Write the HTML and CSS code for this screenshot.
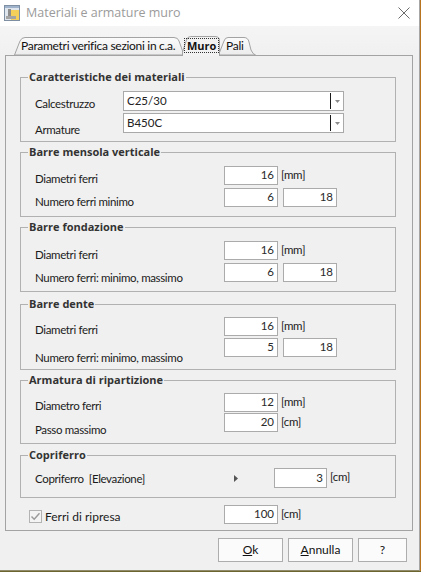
FILE: index.html
```html
<!DOCTYPE html>
<html lang="it">
<head>
<meta charset="utf-8">
<title>Materiali e armature muro</title>
<link rel="stylesheet" href="styles.css">
</head>
<body>
<div class="window">
  <div class="titlebar">
    <svg class="app-icon" width="16" height="16" viewBox="0 0 16 16">
      <rect x="0.5" y="0.5" width="15" height="15" fill="#dfe6ee" stroke="#7f8fa3"/>
      <rect x="1" y="1" width="14" height="2" fill="#9fb4cc"/>
      <rect x="7" y="5" width="8" height="10" fill="#f4cf5a"/>
      <rect x="4" y="4" width="3" height="8" fill="#8d8d8d"/>
      <rect x="2" y="11" width="10" height="3" fill="#a4a4a4"/>
    </svg>
    <span class="title">Materiali e armature muro</span>
    <svg class="close" width="12" height="12" viewBox="0 0 12 12">
      <path d="M0.5 0.5 L11.5 11.5 M11.5 0.5 L0.5 11.5" stroke="#6b6b6b" stroke-width="1" fill="none"/>
    </svg>
  </div>

  <div class="content">
    <div class="tabs">
      <div class="tab tab-first">
        <svg class="tab-shape" width="172" height="18" viewBox="0 0 172 18">
          <defs>
            <linearGradient id="tg" x1="0" y1="0" x2="0" y2="1">
              <stop offset="0" stop-color="#fbfbfb"/>
              <stop offset="1" stop-color="#ececec"/>
            </linearGradient>
          </defs>
          <path d="M0.5 18 L6 4 Q7.5 0.5 11 0.5 L160 0.5 Q164 0.5 165 4 L170 18 Z" fill="url(#tg)" stroke="#a3a3a3"/>
        </svg>
        <span class="tab-text">Parametri verifica sezioni in c.a.</span>
      </div>
      <div class="tab tab-active">
        <svg class="tab-shape" width="39" height="20" viewBox="0 0 39 20">
          <path d="M0.5 20 L0.5 16 L4.5 4 Q5.5 0.5 8.5 0.5 L33 0.5 Q37.5 0.5 37.5 4.5 L37.5 20 Z" fill="#f2f2f2"/>
          <path d="M0.5 20 L0.5 16 L4.5 4 Q5.5 0.5 8.5 0.5 L33 0.5 Q37.5 0.5 37.5 4.5 L37.5 20" fill="none" stroke="#a3a3a3"/>
        </svg>
        <span class="tab-text focus">Muro</span>
      </div>
      <div class="tab tab-last">
        <svg class="tab-shape" width="38" height="18" viewBox="0 0 38 18">
          <path d="M0.5 18 L6 4 Q7 0.5 10 0.5 L26 0.5 Q30 0.5 31 5 L33 13 Q35 17.5 37.5 18 Z" fill="url(#tg)" stroke="#a3a3a3"/>
        </svg>
        <span class="tab-text">Pali</span>
      </div>
    </div>

    <div class="panel">
      <fieldset class="group g1">
        <legend>Caratteristiche dei materiali</legend>
        <div class="rows">
          <div class="row">
            <span class="label lab-combo off-5">Calcestruzzo</span>
            <div class="combo"><span class="combo-value">C25/30</span><span class="combo-btn"><svg width="5" height="3" viewBox="0 0 5 3"><path d="M0 0 H5 L2.5 3 Z" fill="#8a8a8a"/></svg></span></div>
          </div>
          <div class="row">
            <span class="label lab-combo off-9">Armature</span>
            <div class="combo"><span class="combo-value">B450C</span><span class="combo-btn"><svg width="5" height="3" viewBox="0 0 5 3"><path d="M0 0 H5 L2.5 3 Z" fill="#8a8a8a"/></svg></span></div>
          </div>
        </div>
      </fieldset>

      <fieldset class="group g2">
        <legend>Barre mensola verticale</legend>
        <div class="rows">
          <div class="row">
            <span class="label lab-num off-5">Diametri ferri</span>
            <span class="field">16</span><span class="unit">[mm]</span>
          </div>
          <div class="row">
            <span class="label lab-num off-6">Numero ferri minimo</span>
            <span class="field">6</span><span class="field second">18</span>
          </div>
        </div>
      </fieldset>

      <fieldset class="group g3">
        <legend>Barre fondazione</legend>
        <div class="rows">
          <div class="row">
            <span class="label lab-num off-6">Diametri ferri</span>
            <span class="field">16</span><span class="unit">[mm]</span>
          </div>
          <div class="row">
            <span class="label lab-num off-7">Numero ferri: minimo, massimo</span>
            <span class="field">6</span><span class="field second">18</span>
          </div>
        </div>
      </fieldset>

      <fieldset class="group g4">
        <legend>Barre dente</legend>
        <div class="rows">
          <div class="row">
            <span class="label lab-num off-5">Diametri ferri</span>
            <span class="field">16</span><span class="unit">[mm]</span>
          </div>
          <div class="row">
            <span class="label lab-num off-12">Numero ferri: minimo, massimo</span>
            <span class="field">5</span><span class="field second">18</span>
          </div>
        </div>
      </fieldset>

      <fieldset class="group g5">
        <legend>Armatura di ripartizione</legend>
        <div class="rows">
          <div class="row">
            <span class="label lab-num off-5">Diametro ferri</span>
            <span class="field">12</span><span class="unit">[mm]</span>
          </div>
          <div class="row">
            <span class="label lab-num off-9">Passo massimo</span>
            <span class="field">20</span><span class="unit">[cm]</span>
          </div>
        </div>
      </fieldset>

      <fieldset class="group g6">
        <legend>Copriferro</legend>
        <div class="rows">
          <div class="row">
            <span class="label lab-cop off-3">Copriferro&nbsp;&nbsp;[Elevazione]</span>
            <span class="arrow"><svg width="4" height="7" viewBox="0 0 4 7"><path d="M0 0 L4 3.5 L0 7 Z" fill="#555"/></svg></span>
            <span class="field narrow">3</span><span class="unit">[cm]</span>
          </div>
        </div>
      </fieldset>

      <div class="check-row">
        <span class="check-label">
          <span class="checkbox"><svg width="11" height="11" viewBox="0 0 11 11"><path d="M1.5 5.5 L4.2 8.3 L9.5 2.3" fill="none" stroke="#9a9a9a" stroke-width="1.4"/></svg></span>
          <span class="check-text">Ferri di ripresa</span>
        </span>
        <span class="field">100</span><span class="unit">[cm]</span>
      </div>
    </div>

    <div class="buttons">
      <button class="btn"><u>O</u>k</button>
      <button class="btn"><u>A</u>nnulla</button>
      <button class="btn btn-help">?</button>
    </div>
  </div>
</div>
</body>
</html>
```

FILE: styles.css
```css
* { box-sizing: border-box; }

html, body {
  margin: 0;
  padding: 0;
}

body {
  width: 421px;
  height: 572px;
  background: #6c6530;
  font-family: Lato, "Open Sans", "DejaVu Sans", sans-serif;
  font-size: 11.5px;
  color: #1b1b1b;
  overflow: hidden;
}

.window {
  width: 420px;
  height: 571px;
  background: #f0f0f0;
  border-right: 1px solid #a6a6a6;
  border-bottom: 1px solid #8e8a6a;
  box-shadow: 1px 0 0 #b8741f;
}

/* title bar */
.titlebar {
  height: 26px;
  background: #ffffff;
  display: flex;
  align-items: center;
}

.app-icon {
  margin-left: 4px;
  flex: none;
}

.title {
  margin-left: 6px;
  font-family: "Open Sans", "Noto Sans", sans-serif;
  font-size: 12.5px;
  color: #9b9b9b;
  line-height: 16px;
}

.close {
  margin-left: auto;
  margin-right: 9px;
}

/* content */
.content {
  padding: 0 6px 0 5px;
  background: linear-gradient(#f5f5f5 0, #f0f0f0 30px);
}

.tabs {
  position: relative;
  z-index: 1;
  display: flex;
  align-items: flex-end;
  height: 29px;
  padding-left: 9px;
}

.tab {
  position: relative;
  height: 18px;
  display: flex;
  align-items: center;
  flex: none;
}

.tab-shape {
  position: absolute;
  left: 0;
  top: 0;
}

.tab-text {
  position: relative;
  line-height: 14px;
  font-size: 12px;
  letter-spacing: -0.3px;
  color: #111;
}

.tab-first {
  width: 172px;
  padding-left: 7px;
}

.tab-active {
  width: 39px;
  height: 20px;
  margin-left: -4px;
  margin-bottom: -1px;
  z-index: 2;
  padding-left: 3px;
  padding-bottom: 2px;
}

.tab-active .tab-text {
  font-family: "Open Sans", sans-serif;
  font-size: 11px;
  font-weight: 700;
  letter-spacing: 0;
  outline: 1px dotted #333;
  outline-offset: 0;
  padding: 0 2px;
  line-height: 13px;
}

.tab-last {
  width: 38px;
  margin-left: -3px;
  padding-left: 8px;
}

/* panel */
.panel {
  border: 1px solid #a3a3a3;
  padding: 14px 16px 6px 14px;
}

.group {
  margin: 3px 0 0;
  border: 1px solid #b1b1b1;
  padding: 0 0 0 7px;
  min-width: 0;
}

.group legend {
  font-family: "Open Sans", "Noto Sans", sans-serif;
  font-size: 11px;
  font-weight: 700;
  color: #333;
  line-height: 14px;
  padding: 0 1px;
  margin-left: 0;
}

.g1 { margin-top: 0; padding-top: 7px; padding-bottom: 8px; }
.g2 { padding-top: 7px; padding-bottom: 9px; }
.g3 { padding-top: 7px; padding-bottom: 9px; }
.g4 { margin-top: 5px; padding-top: 6px; padding-bottom: 12px; }
.g5 { padding-top: 6px; padding-bottom: 11px; }
.g6 { margin-top: 4px; padding-top: 6px; padding-bottom: 10px; }

.rows {
  padding-left: 7px;
  display: flex;
  flex-direction: column;
}

.g1 .rows { gap: 2px; }
.g2 .rows, .g3 .rows { gap: 3px; }
.g4 .rows { gap: 2px; }
.g5 .rows { gap: 1px; }

.row {
  display: flex;
  align-items: flex-start;
  height: 19px;
}

.g1 .row { height: 20px; }

.label {
  flex: none;
  line-height: 15px;
  letter-spacing: -0.35px;
  white-space: nowrap;
}

.lab-combo { width: 88px; }
.lab-num { width: 189px; }
.lab-cop { width: 199px; }

.off-3 { margin-top: 3px; }
.off-5 { margin-top: 5px; }
.off-6 { margin-top: 6px; }
.off-7 { margin-top: 7px; }
.off-9 { margin-top: 9px; }
.off-12 { margin-top: 12px; }

/* combo */
.combo {
  width: 221px;
  height: 20px;
  border: 1px solid #a9a9a9;
  background: #fff;
  display: flex;
  align-items: stretch;
}

.combo-value {
  flex: 1;
  padding-left: 3px;
  line-height: 17px;
  color: #222;
}

.combo-btn {
  width: 13px;
  border-left: 1px solid #1a1a1a;
  margin: 1px 0;
  display: flex;
  align-items: center;
  justify-content: center;
  padding-left: 1px;
}

/* numeric fields */
.field {
  flex: none;
  width: 54px;
  height: 19px;
  border: 1px solid #ababab;
  background: #fff;
  text-align: right;
  padding-right: 3px;
  line-height: 16px;
  color: #2a2a2a;
}

.field.second { margin-left: 5px; }
.field.narrow { width: 53px; height: 20px; line-height: 17px; }

.unit {
  margin-left: 3px;
  line-height: 17px;
  letter-spacing: -0.3px;
  color: #1b1b1b;
}

.arrow {
  width: 40px;
  flex: none;
  padding-top: 7px;
  display: flex;
  align-items: flex-start;
}

/* checkbox row */
.check-row {
  margin-top: 7px;
  display: flex;
  align-items: flex-start;
  height: 19px;
}

.check-label {
  width: 204px;
  flex: none;
  display: flex;
  align-items: center;
  padding-left: 9px;
  padding-top: 5px;
}

.checkbox {
  width: 13px;
  height: 13px;
  border: 1px solid #b3b3b3;
  background: #f4f4f4;
  display: flex;
  align-items: center;
  justify-content: center;
}

.check-text {
  margin-left: 3px;
  line-height: 13px;
  font-size: 12px;
  color: #1b1b1b;
}

/* buttons */
.buttons {
  display: flex;
  justify-content: flex-end;
  gap: 5px;
  margin-top: 7px;
  padding-right: 6px;
}

.btn {
  width: 65px;
  height: 24px;
  border: 1px solid #adadad;
  background: #fbfbfb;
  font-family: inherit;
  font-size: 12px;
  color: #111;
  padding: 0;
  line-height: 18px;
}

.btn-help { width: 49px; }
```
